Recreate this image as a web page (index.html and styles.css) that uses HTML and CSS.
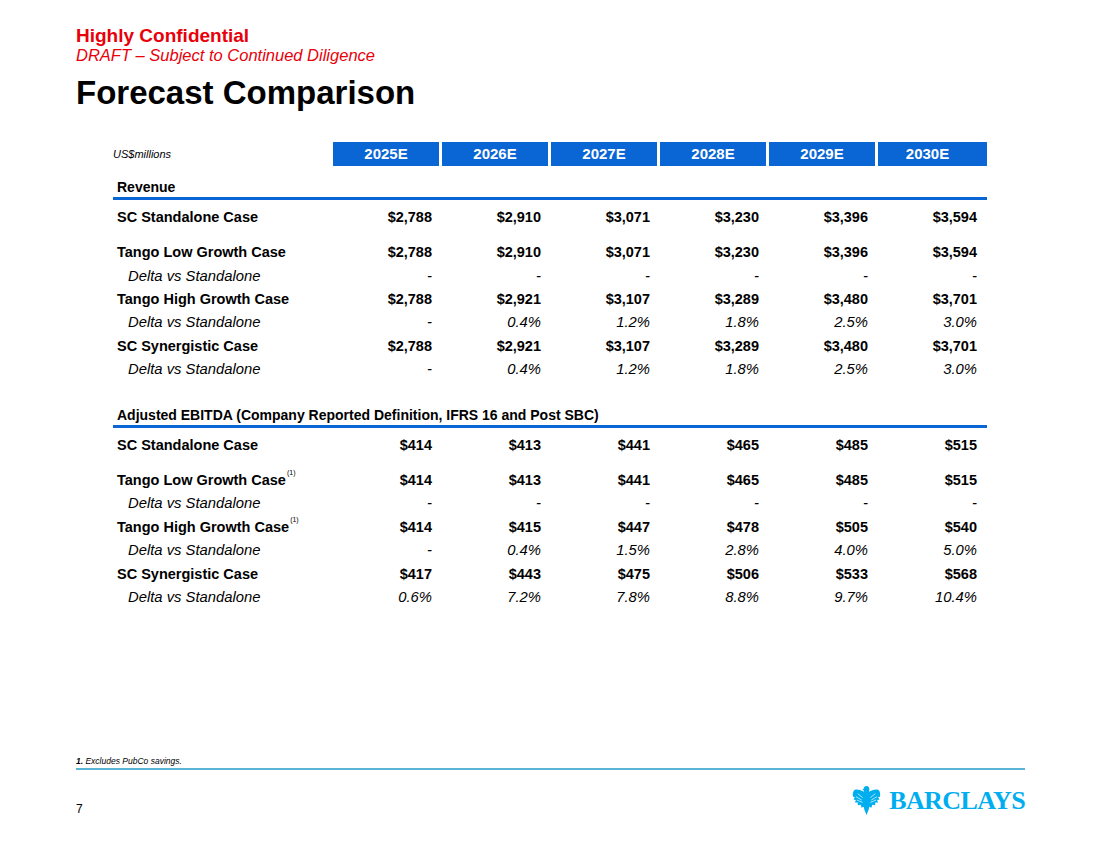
FILE: index.html
```html
<!DOCTYPE html>
<html>
<head>
<meta charset="utf-8">
<link rel="stylesheet" href="styles.css">
</head>
<body>
<div class="slide">
  <div class="conf">Highly Confidential</div>
  <div class="draft">DRAFT – Subject to Continued Diligence</div>
  <h1 class="title">Forecast Comparison</h1>

  <div class="table">
    <div class="row head">
      <div class="unit">US$millions</div>
      <div class="yr">2025E</div><div class="yr">2026E</div><div class="yr">2027E</div>
      <div class="yr">2028E</div><div class="yr">2029E</div><div class="yr">2030E</div>
    </div>

    <div class="section">Revenue</div>
    <div class="row main first">
      <div class="lbl">SC Standalone Case</div>
      <div>$2,788</div><div>$2,910</div><div>$3,071</div><div>$3,230</div><div>$3,396</div><div>$3,594</div>
    </div>
    <div class="row main">
      <div class="lbl">Tango Low Growth Case</div>
      <div>$2,788</div><div>$2,910</div><div>$3,071</div><div>$3,230</div><div>$3,396</div><div>$3,594</div>
    </div>
    <div class="row delta">
      <div class="lbl">Delta vs Standalone</div>
      <div>-</div><div>-</div><div>-</div><div>-</div><div>-</div><div>-</div>
    </div>
    <div class="row main">
      <div class="lbl">Tango High Growth Case</div>
      <div>$2,788</div><div>$2,921</div><div>$3,107</div><div>$3,289</div><div>$3,480</div><div>$3,701</div>
    </div>
    <div class="row delta">
      <div class="lbl">Delta vs Standalone</div>
      <div>-</div><div>0.4%</div><div>1.2%</div><div>1.8%</div><div>2.5%</div><div>3.0%</div>
    </div>
    <div class="row main">
      <div class="lbl">SC Synergistic Case</div>
      <div>$2,788</div><div>$2,921</div><div>$3,107</div><div>$3,289</div><div>$3,480</div><div>$3,701</div>
    </div>
    <div class="row delta">
      <div class="lbl">Delta vs Standalone</div>
      <div>-</div><div>0.4%</div><div>1.2%</div><div>1.8%</div><div>2.5%</div><div>3.0%</div>
    </div>

    <div class="section second">Adjusted EBITDA (Company Reported Definition, IFRS 16 and Post SBC)</div>
    <div class="row main first">
      <div class="lbl">SC Standalone Case</div>
      <div>$414</div><div>$413</div><div>$441</div><div>$465</div><div>$485</div><div>$515</div>
    </div>
    <div class="row main">
      <div class="lbl">Tango Low Growth Case<sup class="fn">(1)</sup></div>
      <div>$414</div><div>$413</div><div>$441</div><div>$465</div><div>$485</div><div>$515</div>
    </div>
    <div class="row delta">
      <div class="lbl">Delta vs Standalone</div>
      <div>-</div><div>-</div><div>-</div><div>-</div><div>-</div><div>-</div>
    </div>
    <div class="row main">
      <div class="lbl">Tango High Growth Case<sup class="fn">(1)</sup></div>
      <div>$414</div><div>$415</div><div>$447</div><div>$478</div><div>$505</div><div>$540</div>
    </div>
    <div class="row delta">
      <div class="lbl">Delta vs Standalone</div>
      <div>-</div><div>0.4%</div><div>1.5%</div><div>2.8%</div><div>4.0%</div><div>5.0%</div>
    </div>
    <div class="row main">
      <div class="lbl">SC Synergistic Case</div>
      <div>$417</div><div>$443</div><div>$475</div><div>$506</div><div>$533</div><div>$568</div>
    </div>
    <div class="row delta">
      <div class="lbl">Delta vs Standalone</div>
      <div>0.6%</div><div>7.2%</div><div>7.8%</div><div>8.8%</div><div>9.7%</div><div>10.4%</div>
    </div>
  </div>

  <footer class="footer">
    <div class="footnote"><b>1.</b> Excludes PubCo savings.</div>
    <div class="bottom">
      <div class="pagenum">7</div>
      <div class="logo">
        <svg class="eagle" viewBox="0 0 30 32" width="29" height="31" aria-hidden="true">
          <path fill="#00aeef" d="M15 1C13 1 12 2.5 12 4L10.5 4.8L12 5.5L12.5 7C10 6 6 4 3 5C1 6 0.5 9 1 12L3 12.5L1.5 15L4 15.5L3 18L6 18L6 21L9 20.5L10 23.5L12 22.5L13 26L15 31L17 26L18 22.5L20 23.5L21 20.5L24 21L24 18L27 18L26 15.5L28.5 15L27 12.5L29 12C29.5 9 29 6 27 5C24 4 20 6 17.5 7L18 5C18 2.5 17 1 15 1Z"/>
          <path fill="none" stroke="#fff" stroke-width="0.7" d="M6 9L11 13M4 12L10 15.5M5 15.5L11 18M24 9L19 13M26 12L20 15.5M25 15.5L19 18"/>
        </svg>
        <span class="wordmark">BARCLAYS</span>
      </div>
    </div>
  </footer>
</div>
</body>
</html>
```

FILE: styles.css
```css
html, body {
  margin: 0;
  padding: 0;
  background: #fff;
}
body {
  font-family: "Liberation Sans", Arial, sans-serif;
  color: #000;
}
.slide {
  width: 1100px;
  height: 849px;
  box-sizing: border-box;
  padding: 25px 75px 33px 76px;
  display: flex;
  flex-direction: column;
}
.conf {
  color: #e8000b;
  font-weight: bold;
  font-size: 19px;
  line-height: 22px;
}
.draft {
  color: #e8000b;
  font-style: italic;
  font-size: 16.5px;
  line-height: 16px;
}
.title {
  margin: 11px 0 0 0;
  font-size: 33px;
  line-height: 38px;
  font-weight: bold;
}
.table {
  margin: 30px 0 0 37px;
  width: 874px;
}
.row {
  display: grid;
  grid-template-columns: 217px repeat(5, 106px) 109px;
  column-gap: 3px;
  align-items: center;
}
.row > div {
  text-align: right;
  padding-right: 7px;
  white-space: nowrap;
}
.row > div:last-child {
  padding-right: 10px;
}
.row > .lbl {
  text-align: left;
  padding-left: 4px;
  padding-right: 0;
}
.head {
  height: 24px;
}
.head > .unit {
  font-style: italic;
  font-size: 11px;
  text-align: left;
  padding: 0;
}
.head > .yr {
  background: #0a66d4;
  color: #fff;
  font-weight: bold;
  font-size: 15px;
  line-height: 24px;
  text-align: center;
  padding: 0;
}
.section {
  margin-top: 12px;
  padding: 0 0 1px 4px;
  font-weight: bold;
  font-size: 14px;
  line-height: 18px;
  border-bottom: 3px solid #0a66d4;
}
.section.second {
  margin-top: 25px;
}
.row.main, .row.delta {
  height: 23.4px;
  font-size: 14.5px;
}
.row.main {
  font-weight: bold;
}
.row.first {
  margin-top: 5.5px;
  margin-bottom: 11.6px;
}
.row.delta {
  font-style: italic;
  font-size: 14.8px;
}
.row.delta > .lbl {
  padding-left: 15px;
}
.fn {
  font-size: 7px;
  font-weight: normal;
  vertical-align: top;
  position: relative;
  top: -3px;
  margin-left: 1px;
}
.footer {
  margin-top: auto;
}
.footnote {
  font-size: 8.5px;
  font-style: italic;
  line-height: 11px;
  padding-bottom: 1.5px;
  border-bottom: 2px solid #5ab4d6;
}
.footnote b {
  font-weight: bold;
}
.bottom {
  display: flex;
  justify-content: space-between;
  align-items: flex-end;
  margin-top: 15px;
}
.pagenum {
  font-size: 12px;
  line-height: 14px;
}
.logo {
  display: flex;
  align-items: center;
  gap: 8px;
}
.eagle {
  display: block;
}
.wordmark {
  font-family: "Liberation Serif", "Times New Roman", serif;
  font-weight: bold;
  font-size: 26px;
  line-height: 30px;
  color: #00aeef;
  letter-spacing: -0.6px;
}
```
